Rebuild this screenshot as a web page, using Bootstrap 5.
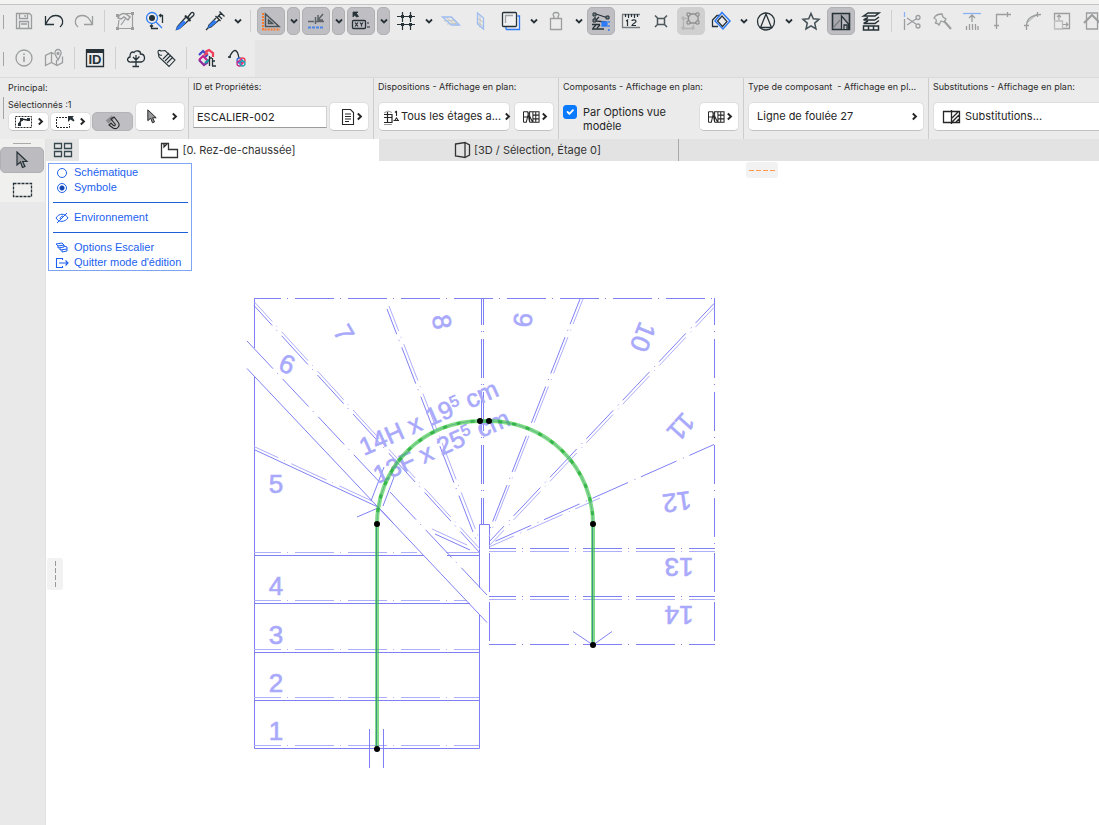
<!DOCTYPE html>
<html lang="fr">
<head>
<meta charset="utf-8">
<meta name="viewport" content="width=device-width, initial-scale=1">
<title>Escalier – mode d'édition</title>
<link href="https://cdn.jsdelivr.net/npm/bootstrap@5.3.0/dist/css/bootstrap.min.css" rel="stylesheet">
<style>
  :root { --ink:#263238; --dim:#9b9d9e; --blue:#2f7bf5; --bar:#ebebeb; --strong:#8080f5; --soft:#aeaefc; }
  body { font-family:Inter,"Liberation Sans",sans-serif; font-size:12px; color:#262626; background:#fff; overflow:hidden; }
  button { font:inherit; color:inherit; }
  svg { display:block; flex:none; fill:none; stroke:currentColor; stroke-width:1.3; }
  .titlestrip { height:5px; background:#f3f3f1; border-bottom:1px solid #c4c4c4; }
  .toolrow { background:var(--bar); color:var(--ink); padding:2px 0 5px 9px; overflow:hidden; }
  .toolrow.second { background:#e5e5e5; padding:0; }
  .second-inner { background:var(--bar); padding:4px 3px 5px 9px; }
  .grip { position:absolute; left:3px; width:1px; height:14px; background:#a5a5a5; }
  .tool { flex:none; width:30px; height:28px; padding:0; border:0; background:none; display:flex; align-items:center; justify-content:center; }
  .tool.on, .drop.on { background:#bfbec3; border:1px solid #b0afb4; border-radius:5px; }
  .tool.on { width:28px; margin:0 1px; }
  .tool.faded { background:#d0d0d0; border-radius:5px; width:28px; margin:0 1px; }
  .drop { flex:none; width:15px; height:28px; padding:0; border:0; background:none; display:flex; align-items:center; justify-content:center; }
  .drop.on { width:13px; margin:0 1px; }
  .split { flex:none; width:1px; height:22px; margin:3px 5px; background:#cfcfcf; }
  .dim { color:var(--dim); }
  .infobar { background:var(--bar); border-top:1px solid #dadada; overflow:hidden; }
  .panel { flex:none; width:185px; padding:2px 4px 8px 4px; border-left:1px solid #cdcdcd; }
  .panel.first { width:188px; border-left:0; padding-left:8px; padding-right:3px; }
  .panel.rest { flex:1 0 185px; padding-right:0; }
  .cap { font-size:9px; line-height:14px; white-space:pre; margin-bottom:8px; color:#2b2b2b; }
  .first .cap { margin-bottom:3px; }
  .box { height:29px; background:#fff; border:1px solid #dedede; border-bottom-color:#c2c2c2; border-radius:5px; padding:0 5px; display:flex; align-items:center; gap:4px; white-space:nowrap; }
  .box.sm { height:19px; width:41px; padding:0 3px; justify-content:space-between; gap:0; }
  .box.pair { width:40px; padding:0 4px 0 3px; gap:0; justify-content:space-between; }
  .smalls { gap:1px; }
  .box.pressed { background:#bfbec3; border-color:#b3b2b7; justify-content:center; }
  .idfield { width:134px; height:22px; border:1px solid #d0d0d0; border-bottom-color:#9c9c9c; padding:0 3px; font-size:11px; color:#222; background:#fff; border-radius:0; }
  .form-check-input.opt { width:14px; height:14px; border-radius:3px; margin:3px 0 0; flex:none; }
  .form-check-input.opt:checked { background-color:#0a7aff; border-color:#0a7aff; }
  .optrow { height:29px; }
  .optrow label { font-size:11px; line-height:14px; padding:3px 6px 0; }
  .toolbox { width:46px; background:#e9e9e9; border-right:1px solid #e2e2e2; }
  .toolbox-in { background:#f0f0ef; height:63px; }
  .toolbox .bar { width:18px; height:1px; background:#aaa; margin:4px auto 3px 13px; }
  .side { width:44px; height:26px; padding:0; border:0; background:none; display:flex; align-items:center; justify-content:center; color:var(--ink); }
  .side.on { background:#bcbbc0; border:1px solid #b0afb4; border-radius:5px; }
  .tabs { height:22px; background:#e3e3e3; }
  .grid-btn { width:33px; border:0; background:#e5e5e5; padding:0; display:flex; align-items:center; justify-content:center; color:#37474f; }
  .viewtab { width:300px; border:0; border-right:1px solid #a8a8a8; background:#e3e3e3; display:flex; align-items:center; justify-content:center; gap:3px; padding:0 2px 0 0; font-size:11px; color:#333; }
  .viewtab.current { background:#fff; border-right:0; }
  .drawing { min-width:0; overflow:hidden; }
  .drawing > svg { width:100%; height:100%; }
  .palette { position:absolute; left:2px; top:2px; width:144px; border:1px solid #7ea4f2; background:#fff; padding:1px 3px 0 4px; font-family:"Liberation Sans",sans-serif; font-size:11px; line-height:15px; }
  .palette a, .palette label { color:#1b5ff0; text-decoration:none; display:flex; align-items:center; gap:4px; height:15px; white-space:nowrap; padding-left:2px; }
  .palette label { padding-left:4px; gap:7px; }
  .palette a { gap:5px; }
  .palette hr { margin:7px 0; border:0; border-top:1px solid #1d5fd8; opacity:1; }
  .palette input { appearance:none; width:10px; height:10px; margin:0; border:1px solid #1f62e6; border-radius:50%; background:#fff; }
  .palette input:checked { background:radial-gradient(circle,#1546b5 0 2px,#fff 3px); }
  .handle { position:absolute; background:#f2f2f2; border-radius:3px; display:flex; align-items:center; justify-content:center; }
  .stairs { stroke-width:1; }
  .stairs .a { stroke:var(--strong); }
  .stairs .b { stroke:var(--soft); }
  .stairs .dd { stroke-dasharray:39 6 1 7; stroke-dashoffset:12; }
  .stairs text { font-family:"Liberation Sans",sans-serif; font-size:26px; fill:#a9a9fb; stroke:#a9a9fb; stroke-width:.6; }
  .stairs .dim-text { font-size:25px; }
</style>
</head>
<body class="vh-100 d-flex flex-column">
<svg width="0" height="0" class="position-absolute">
  <symbol id="dn" viewBox="0 0 8 8"><path d="M1 2.5 4 5.5 7 2.5" stroke-width="1.8"/></symbol>
  <symbol id="rt" viewBox="0 0 8 8"><path d="M2.5 1.3 5.3 4 2.5 6.7" stroke-width="1.7"/></symbol>
  <symbol id="bnv" viewBox="0 0 18 12"><path d="M.500 .500v11M.500 .500h4.500l2 11V.500h3.500v11h6.500v-11h-6.500M.500 11.500h3L6 1M.500 6h4.500M7 11.500h3M7 5l3 6M13.500 .500v11M11 4h6M11 8h6" stroke-width="1.100"/></symbol>
  <symbol id="cursor" viewBox="0 0 14 18"><path d="M2 1v13l3.500-3 2 5.500 2.500-1-2.300-5H12z" fill="#999b9e" stroke-width="1.200"/></symbol>
</svg>

<div class="titlestrip flex-shrink-0"></div>
<div class="toolrow d-flex flex-shrink-0 position-relative" role="toolbar" aria-label="Outils">
  <span class="grip" style="top:10px"></span>
  <button class="tool dim" aria-label="Enregistrer"><svg width="24" height="24"><path d="M4.500 4.500h13l2 2v13h-15zM7.500 4.500v5h8v-5M7.500 19.500v-7h9v7M9 15h6M13 6v2"/></svg></button>
  <button class="tool" aria-label="Annuler"><svg width="24" height="24"><path d="M3.500 7v8.500H12M3.500 15.500C7 9 9 6.500 13.500 6.500c7 0 9.500 7 4.500 11.500"/></svg></button>
  <button class="tool dim" aria-label="Rétablir"><svg width="24" height="24"><path d="M20.500 7v8.500H12M20.500 15.500C17 9 15 6.500 10.500 6.500c-7 0-9.500 7-4.500 11.500"/></svg></button>
  <span class="split"></span>
  <button class="tool dim" aria-label="Modifier"><svg width="24" height="24"><path d="M5 19.500h14M19.500 19V6M5 18 6 11M8 16l5-7M13 4.500h6" stroke-width="1.200"/><path d="M5 9c1-4 5-5 8-4l4 3-2 3-4-3-3 2z" stroke-width="1.500"/><path d="M3 18h3v3H3zM18 18h3v3h-3zM18 3h3v3h-3zM3 5h3v3H3z" fill="currentColor" stroke="none"/></svg></button>
  <button class="tool" aria-label="Rechercher"><svg width="24" height="24"><g stroke="#2f7bf5" stroke-width="1.300"><circle cx="9" cy="9" r="5.500"/><path d="m13 13 6 6"/></g><circle cx="9" cy="9" r="3" fill="#263238" stroke="none"/><path d="M19.500 14V6.500h-3m1.500-1.500L16.500 6.500l1.500 1.500M15 19.500H8.500V16m-1.500 1.500L8.500 16l1.500 1.500"/></svg></button>
  <button class="tool" aria-label="Pipette"><svg width="24" height="24"><path d="m13 8-8.500 9.500-1 3 3-1L16 11" /><path d="m10.500 12-6 6-1 2.500 3-1 6-6z" fill="#2f7bf5" stroke="#2f7bf5" stroke-width="1"/><path d="m12 6.500 5.500 5.500" stroke-width="2"/><path d="m15 8 3-4c2-1.500 4 .5 2.500 2.500l-4 3.500z"/></svg></button>
  <button class="tool" aria-label="Seringue"><svg width="24" height="24"><path d="m12.500 7 5 5M16 7l3 3M14 9l4-5M16.500 2.500l5 5M13 9l-7 7-1 3 3-1 8-7M6 18l-3 3"/><path d="m11 12-4 4-1 2 2-1 5-4z" fill="#2f7bf5" stroke="#2f7bf5"/></svg></button>
  <button class="drop" aria-label="Plus"><svg width="8" height="8"><use href="#dn"/></svg></button>
  <span class="split"></span>
  <button class="tool on" aria-label="Équerre"><svg width="24" height="24"><path d="M4 4v16.500H21" stroke="#ff7b2e" stroke-width="2" stroke-dasharray="2 1"/><path d="M6.500 5v12.500H20zM9.500 11v3.500h4z" stroke-width="1.500" stroke="#4a5358"/></svg></button>
  <button class="drop on" aria-label="Plus"><svg width="8" height="8"><use href="#dn"/></svg></button>
  <button class="tool on" aria-label="Accrochage"><svg width="24" height="24"><path d="M4 12.500h6M12 12.500h8M11.500 8v7M19 5l-5 6m0-5v5h5" stroke="#5c6468" stroke-width="1.500"/><path d="M4 18.500h16" stroke="#4c86e8" stroke-width="2" stroke-dasharray="3 1"/></svg></button>
  <button class="drop on" aria-label="Plus"><svg width="8" height="8"><use href="#dn"/></svg></button>
  <button class="tool on" aria-label="Coordonnées"><svg width="24" height="24"><path d="M4 3h5L7.500 4.500l2 3-2 .500-2-2L4 8z" fill="#263238" stroke-width=".8"/><rect x="3.500" y="11.500" width="13" height="8" rx="1"/><path d="m6 13.500 3 4m0-4-3 4M11 13.500l1.500 2 1.500-2m-1.500 2v2M18 14h2M18 18h3" stroke-width="1.200"/></svg></button>
  <button class="drop on" aria-label="Plus"><svg width="8" height="8"><use href="#dn"/></svg></button>
  <button class="tool" aria-label="Grille"><svg width="24" height="24"><path d="M3 7.500h5M10 7.500h5M17 7.500h4M3 15.500h5M10 15.500h5M17 15.500h4M8.500 3v3M8.500 9v4M8.500 17v4M16.500 3v3M16.500 9v4M16.500 17v4" stroke-width="1.200"/><path d="M7 6h3v3H7zM15 6h3v3h-3zM7 14h3v3H7zM15 14h3v3h-3z" fill="#263238" stroke="none"/></svg></button>
  <button class="drop" aria-label="Plus"><svg width="8" height="8"><use href="#dn"/></svg></button>
  <button class="tool" aria-label="Plan horizontal"><svg width="24" height="24"><path d="m5 12 10-.500M8 15l10-.500M7 8l9 8M12 8l6 8" stroke="#c6c6bf" stroke-width="1"/><path d="M3.500 8h9L20.500 16h-8z" stroke="#9dbdf2"/></svg></button>
  <button class="tool" aria-label="Plan vertical"><svg width="24" height="24"><path d="M8 9l6 4M8 13l6 4M11 6v13" stroke="#c6c6bf" stroke-width="1"/><path d="M8.500 4v11l6 5V9z" stroke="#9dbdf2"/></svg></button>
  <button class="tool" aria-label="Calques"><svg width="24" height="24"><path d="M7 20.500h13.500V7h-2M7 18v2.500" stroke="#2f7bf5" stroke-width="1.300"/><rect x="3.500" y="3.500" width="14" height="14" rx="1" fill="#f1f1f1"/><path d="M6.500 14V6.500H14" stroke="#a0a4a6"/></svg></button>
  <button class="drop" aria-label="Plus"><svg width="8" height="8"><use href="#dn"/></svg></button>
  <button class="tool dim" aria-label="Poids"><svg width="24" height="24"><path d="M6.500 9.500h11v11h-11zM9.500 9c0-1 1-1 .500-1.500C8 5 9.500 3.500 12 3.500s4 1.500 2 4c-.500.500.500.500.500 1.500"/></svg></button>
  <button class="drop" aria-label="Plus"><svg width="8" height="8"><use href="#dn"/></svg></button>
  <button class="tool on" aria-label="Trace"><svg width="24" height="24"><path d="m7 5 12 4M6 12l4-4M6 8v4l11 1" stroke-width="1.300"/><path d="M4 4h3v3H4zM17 7h3v3h-3zM4 10h3v3H4z" fill="#7b8489" stroke-width="1"/><path d="M3 15.500h8M3 20h12M4 19l3-3M8 19l3-3" stroke-width="1.300"/><path d="M13 13h5v4h-5z" fill="#2f7bf5" stroke="#2f7bf5"/><path d="M20 12v9h-3" stroke="#2f7bf5" stroke-dasharray="2 2"/></svg></button>
  <button class="tool" aria-label="Mesurer"><svg width="24" height="24"><path d="M21 5.500H3.500v13H21" stroke="#777d80"/><path d="M6.500 5v3M9.500 5v4M12.500 5v3M15.500 5v4M18.500 5v3M7 12l1.500-1v6M13 12c0-1.500 4-1.500 4 .5 0 1.500-4 2-4 4h4" stroke-width="1.200"/></svg></button>
  <button class="tool" aria-label="Ajuster"><svg width="24" height="24"><path d="M8.500 9.500h7v6h-7zM6 6.500l3 3M18 6.500l-3 3M6 18l3-3M18 18l-3-3" stroke="#4c565b" stroke-width="1.500"/></svg></button>
  <button class="tool faded dim" aria-label="Groupe"><svg width="24" height="24"><path d="M4.500 9v10.500h10v-4M5 9.500h4" stroke="#b4b4b4"/><path d="M9.500 14v-9H19v9z" stroke="#8d8d8d"/><path d="M8 4h3v3H8zM17 4h3v3h-3zM8 12h3v3H8zM17 12h3v3h-3z" fill="#d0d0d0" stroke="#858585" stroke-width="1"/><path d="M3 8h2v2H3zM3 18h2v2H3zM13 18h2v2h-2z" fill="#d0d0d0" stroke="#b0b0b0" stroke-width="1"/></svg></button>
  <button class="tool" aria-label="Rotation"><svg width="24" height="24"><path d="M9 17.500H3.500V11L8 6.500h3"/><path d="m13 3.500 8 8.500-7 8-8-8z" stroke="#2f7bf5" stroke-width="1.500"/><path d="m13 7 5 5.500-4.500 5-5-5.500z" stroke-width="1.200"/></svg></button>
  <button class="drop" aria-label="Plus"><svg width="8" height="8"><use href="#dn"/></svg></button>
  <button class="tool" aria-label="Nord"><svg width="24" height="24"><circle cx="12" cy="12.500" r="8.500"/><path d="M12 5 6.500 18.500h11z"/></svg></button>
  <button class="drop" aria-label="Plus"><svg width="8" height="8"><use href="#dn"/></svg></button>
  <button class="tool" aria-label="Favoris"><svg width="24" height="24"><path d="m12 4.500 2.300 5.300 5.700.500-4.300 3.800 1.300 5.900-5-3.100L7 20l1.300-5.900L4 10.300l5.700-.500z" stroke-width="1.500" stroke="#455057"/></svg></button>
  <button class="tool on" aria-label="Vue"><svg width="24" height="24"><path d="M3.500 4.500h17v16h-17z" fill="#a8a8ae" stroke-width="1.600"/><path d="m4 19 7-8" stroke="#7a7f83"/><path d="M12.500 20V7l7 8v5M15 20v-4h3v4" fill="#bfbec3"/></svg></button>
  <button class="tool" aria-label="Étages"><svg width="24" height="24"><path d="M4.500 7 9 4h11l-4 3zM4.500 11 9 8.500M16 11l4-3M4.500 11H16M4.500 14.500 9 12M4.500 14.500H16l4-3" stroke-width="1.500"/><path d="M4.500 17h15v4h-15zM9.500 17v4M14.500 17v4" stroke-width="1.500"/></svg></button>
  <span class="split"></span>
  <button class="tool dim" aria-label="Couper"><svg width="24" height="24"><path d="M4.500 3v5" stroke="#8ab1f0"/><path d="M4.500 10v11M7 9l9 6M7 16l9-6"/><circle cx="18" cy="8.500" r="2"/><circle cx="18" cy="17" r="2"/></svg></button>
  <button class="tool dim" aria-label="Hache"><svg width="24" height="24"><path d="M4 9c2-4 6-4 8-4l1 3 3 2-2 3-3-1-2 4c-1-2-2-2-4-2 2-1 2-4-1-5z"/><path d="m14 12 7 8" stroke-width="2"/></svg></button>
  <button class="tool dim" aria-label="Étirer"><svg width="24" height="24"><path d="M3 4.500h18" stroke="#8ab1f0"/><path d="M12 13V6M9 9l3-3 3 3M6.500 17v4M9.500 15v6M12.500 15v6M15.500 15v6M18 17v4"/></svg></button>
  <button class="tool dim" aria-label="Angle"><svg width="24" height="24"><path d="M6.500 20V5.500H21M17.500 3v5M4 16.500h5"/></svg></button>
  <button class="tool dim" aria-label="Arrondi"><svg width="24" height="24"><path d="M6.500 21v-5C7 10 12 6 21 5.500M17.500 3v5M4 16.500h5"/><path d="m7 14 10-9" stroke-width=".8"/></svg></button>
  <button class="tool dim" aria-label="Redimensionner"><svg width="24" height="24"><path d="M12 19.500h7.500v-15h-15V11"/><path d="M4.500 12v8h8v-8z" stroke="#bbb"/><path d="M9 11V6M7 8l2-2 2 2M13 15.500h5M16 13.500l2 2-2 2" stroke-width="1.100"/></svg></button>
  <button class="tool dim" aria-label="Toit"><svg width="24" height="24"><path d="m4 14 8-8 8 8" stroke-width="2"/><path d="M6.500 12v8h11v-8M6.500 11V4h11v7" /></svg></button>
</div>
<div class="toolrow second d-flex flex-shrink-0" role="toolbar" aria-label="Outils complémentaires">
  <div class="second-inner d-flex position-relative">
    <span class="grip" style="top:12px"></span>
    <button class="tool dim" aria-label="Infos"><svg width="24" height="24"><circle cx="12" cy="12" r="8"/><path d="M12 10.500V16M12 7.500V9" stroke-width="1.600"/></svg></button>
    <button class="tool dim" aria-label="Carte"><svg width="24" height="24"><path d="M12 8 9.500 6.500l-6 3v10l6-3 5.500 3 5.500-3v-6M9.500 7v9M14.500 14v5"/><path d="m16 14-3-6c-1-6 7-6 6 0z"/><circle cx="16" cy="7.500" r="1"/></svg></button>
    <span class="split"></span>
    <button class="tool" aria-label="ID"><svg width="24" height="24"><path d="M3.500 4v16.500h17V4z" stroke-width="1.300"/><path d="M3 3h18v4H3z" fill="#263238" stroke="none"/><text x="12" y="18" text-anchor="middle" font-family="Liberation Sans" font-size="13" font-weight="bold" fill="#263238" stroke="none">ID</text></svg></button>
    <span class="split"></span>
    <button class="tool" aria-label="Arbre"><svg width="24" height="24"><path d="M8 16c-5 1-6-4-2-5-.500-4 2-6 4-4.500 2-3 7-1.500 6.500 1.500 5 0 5.500 7 .5 8H8zM12 9v11.500M9 11l3 3 3.500-3.500M8.500 20.500H15"/></svg></button>
    <button class="tool" aria-label="Étiquette"><svg width="24" height="24"><path d="M4 6c0-2 2-2 3-1l4-.500L21 14l-6 6.500L5 11zM4 6c0 2 2 4 4 3M9 13l6-6M11 15l6-6M13 17l6-6" stroke-width="1.100"/></svg></button>
    <span class="split"></span>
    <button class="tool" aria-label="Couleurs"><svg width="24" height="24"><g stroke-width="2.200"><path d="m4 9 4-4 4 4-2 2" stroke="#3b49c5"/><path d="m10 6 4-2 4 3v4" stroke="#ef3e5c"/><path d="m4 14 4-4 5 5" stroke="#c1278d"/><path d="m4 14 5 5 4-3" stroke="#8a2d9c"/><path d="m9 9 4-2" stroke="#ef3e5c"/><path d="m10 17 4-3" stroke="#179aa5"/></g><path d="M14.500 10v10M17.500 12v8M14 12h3M17 15h3M17 20h4" stroke-width="1.300"/></svg></button>
    <button class="tool" aria-label="Courbe"><svg width="24" height="24"><path d="M4 12c4-9 8-11 10 0M3 11h3"/><g stroke-width="1.300"><circle cx="14.500" cy="14.500" r="2.500" stroke="#3566d8"/><circle cx="17.500" cy="14.500" r="2.500" stroke="#ef3e5c"/><circle cx="14.500" cy="17.500" r="2.500" stroke="#c1278d"/><circle cx="17.500" cy="17.500" r="2.500" stroke="#20a0b0"/></g></svg></button>
  </div>
</div>

<div class="infobar d-flex flex-shrink-0 position-relative">
  <span class="grip" style="top:19px;height:22px"></span>
  <section class="panel first d-flex align-items-end">
    <div>
      <div class="cap">Principal:</div>
      <div class="cap mb-0">Sélectionnés :1</div>
      <div class="d-flex smalls">
        <button class="box sm" aria-label="Sélection"><svg width="22" height="14"><path d="M3.500 1.500h16v11h-16z" stroke-dasharray="2 1" stroke-width="1"/><path d="m7 9 3-5 5 1" stroke-width="1.500"/><path d="M6 8h3v3H6zM8 3h3v3H8zM15 3h3v3h-3z" fill="#263238" stroke="none"/></svg><svg width="9" height="9"><use href="#rt"/></svg></button>
        <button class="box sm" aria-label="Zone"><svg width="22" height="14"><path d="M13 2.500H2.500v10h13V9" stroke-dasharray="2 1" stroke-width="1"/><path d="M14 1h6l-1.500 1.500 2 3-1 1-3-2L14 7z" fill="#263238" stroke="none"/></svg><svg width="9" height="9"><use href="#rt"/></svg></button>
        <button class="box sm pressed" aria-label="Aimant"><svg width="18" height="16"><path d="m3 8 6-5" stroke="#8c8c90" stroke-width="4"/><path d="m5 11 4 3c4 2 8-2 5-6l-4-5-3 2 4 5c1 1-1 3-2 1L7 9z" stroke-width="1.100"/></svg></button>
      </div>
    </div>
    <button class="box ms-auto justify-content-end" style="width:50px" aria-label="Flèche"><svg width="12" height="15"><use href="#cursor"/></svg><svg class="ms-2" width="9" height="9"><use href="#rt"/></svg></button>
  </section>
  <section class="panel">
    <label class="cap d-block" for="eid">ID et Propriétés:</label>
    <div class="d-flex align-items-center justify-content-between">
      <input id="eid" class="idfield" type="text" value="ESCALIER-002">
      <button class="box pair" aria-label="Propriétés"><svg width="22" height="18"><path d="M9.500 1.500h8l3 3v12h-11zM12 6h6M12 8.500h6M12 11h6M12 13.500h4" stroke-width="1.100"/></svg><svg width="9" height="9"><use href="#rt"/></svg></button>
    </div>
  </section>
  <section class="panel">
    <div class="cap">Dispositions - Affichage en plan:</div>
    <div class="d-flex gap-1">
      <button class="box px-1" style="width:132px;font-size:11px;gap:2px"><svg width="16" height="16"><path d="M1 5.500h8v8H1M4.500 3v11M1 8.500h8" stroke-width="1.200"/><path d="m1 4 4-2 4 1.500M1 15.500h8" stroke="#999" stroke-width="1"/><path d="M13.500 2v5M12 3.500 13.500 2M10.500 11.500H16M12 11l1.500-2L15 11" stroke-width="1.100"/></svg><span class="flex-grow-1 text-start">Tous les étages a...</span><svg width="9" height="9"><use href="#rt"/></svg></button>
      <button class="box pair ps-2" aria-label="Représentation"><svg width="17" height="12"><use href="#bnv"/></svg><svg width="9" height="9"><use href="#rt"/></svg></button>
    </div>
  </section>
  <section class="panel">
    <div class="cap">Composants - Affichage en plan:</div>
    <div class="d-flex optrow">
      <input class="form-check-input opt" type="checkbox" id="byopt" checked>
      <label for="byopt" class="flex-grow-1">Par Options vue<br>modèle</label>
      <button class="box pair ps-2" aria-label="Représentation"><svg width="17" height="12"><use href="#bnv"/></svg><svg width="9" height="9"><use href="#rt"/></svg></button>
    </div>
  </section>
  <section class="panel">
    <div class="cap">Type de composant  - Affichage en pl...</div>
    <button class="box w-100 justify-content-between ps-2 pe-1" style="font-size:11px"><span>Ligne de foulée 27</span><svg width="9" height="9"><use href="#rt"/></svg></button>
  </section>
  <section class="panel rest">
    <div class="cap">Substitutions - Affichage en plan:</div>
    <button class="box w-100 rounded-end-0 border-end-0 ps-2" style="font-size:11px"><svg width="19" height="16"><path d="M9 2.500H1.500v11H9M9.500 1v14M9 2.500h8.500v11H9M10 9l6-6M10 13l7-7M14 13l3-3"/></svg>Substitutions...</button>
  </section>
</div>

<div class="d-flex flex-grow-1" style="min-height:0">
  <aside class="toolbox flex-shrink-0">
    <div class="toolbox-in overflow-hidden">
      <div class="bar"></div>
      <button class="side on" aria-label="Flèche"><svg width="14" height="18"><use href="#cursor"/></svg></button>
      <button class="side mt-1" aria-label="Zone de sélection"><svg width="22" height="18"><path d="M2.500 2.500h18v13h-18z" stroke-dasharray="3 1"/></svg></button>
    </div>
  </aside>
  <main class="d-flex flex-column flex-grow-1" style="min-width:0">
    <div class="tabs d-flex flex-shrink-0">
      <button class="grid-btn" aria-label="Aperçu des onglets"><svg width="20" height="16"><path d="M1.500 1.500h7v5h-7zM11.500 1.500h7v5h-7zM1.500 9.500h7v5h-7zM11.500 9.500h7v5h-7z"/></svg></button>
      <button class="viewtab current"><svg width="19" height="17"><path d="M1.500 1.500h7v6h9v8h-16zM4 2v3l3-3" /></svg>[0. Rez-de-chaussée]</button>
      <button class="viewtab"><svg width="17" height="18"><path d="M1.500 3 11 1.500v15L1.500 15zM11 1.500l4.500 2.500v10L11 16.500"/></svg>[3D / Sélection, Étage 0]</button>
    </div>
    <div class="drawing flex-grow-1 position-relative">
      <svg class="stairs" role="img" aria-label="Plan de l'escalier">
        <g transform="translate(-46 -161)">
          <!-- outline -->
          <path class="a dd" d="M254 298.500H715M714.500 298V548"/>
          <path class="a" d="M254.500 298V348M254.500 376V748.500H479.500V615M479.500 588V524.500H489.500V548"/>
          <path class="a" stroke-dasharray="39 10" d="M489.500 553V644M714.500 553V644"/>
          <path class="a dd" d="M489 548.500H715M489 596.500H715M489 644.500H715"/>
          <path class="b dd" d="M489 551.500H715M489 599.500H715"/>
          <!-- lower flight -->
          <path class="a" d="M254 555.500H424M447 555.500H479M254 603.500H470M254 652.500H479M254 700.500H479"/>
          <path class="b dd" d="M254 552.500H417M254 600.500H467M254 649.500H479M254 697.500H479M254 745.500H479"/>
          <path class="b" d="M446 552.500H479"/>
          <!-- winders, left -->
          <g class="a">
            <path class="dd" d="M254 305.500 480 553M387 309 478 545M481.500 298V524M483.500 298V524"/>
            <path d="M254 449.500 378 507M435 534 470 550"/>
          </g>
          <g class="b">
            <path class="dd" d="M254 301.500 480 549M389 306 480 541M254 446.500 372 501"/>
            <path d="M432 529 467 545"/>
          </g>
          <!-- winders, right -->
          <path class="a dd" d="M580 299 489 531M714 303.500 489 542M714 444.500 489 544"/>
          <path class="b dd" d="M583 299 489 537M714 307.500 489 546"/>
          <path class="b dd" d="M600 498 489 547"/>
          <!-- cut lines -->
          <path class="a" d="M247 368.500 487 622.500M378 507 394 524"/>
          <path class="a" stroke-dasharray="38 6 1 7" d="M247 341 379 481.500M390 492 487 595"/>
          <path class="a" d="M384 467 371 501M394 477 383 506M357 517 378 508"/>
          <path class="a" d="M369.500 729V768M383.500 729V768M573 631.500 593 645 612 631.500"/>
          <!-- tread numbers -->
          <g text-anchor="middle">
            <text x="276" y="740">1</text><text x="276" y="692">2</text><text x="276" y="644">3</text><text x="276" y="595">4</text><text x="276" y="493">5</text>
            <text transform="translate(287 364) rotate(22)" y="9">6</text>
            <text transform="translate(344 333) rotate(60)" y="9">7</text>
            <text transform="translate(442 322) rotate(82)" y="9">8</text>
            <text transform="translate(523 320) rotate(96)" y="9">9</text>
            <text transform="translate(643 337) rotate(112)" y="9">10</text>
            <text transform="translate(681 427) rotate(132)" y="9">11</text>
            <text transform="translate(677 502) rotate(172)" y="9">12</text>
            <text transform="translate(679 567) rotate(180)" y="9">13</text>
            <text transform="translate(679 615) rotate(180)" y="9">14</text>
          </g>
          <text class="dim-text" transform="translate(364 456) rotate(-24)">14H x 19<tspan dy="-8" style="font-size:16px">5</tspan><tspan dy="8"> cm</tspan></text>
          <text class="dim-text" transform="translate(378 484) rotate(-24)">13F x 25<tspan dy="-8" style="font-size:16px">5</tspan><tspan dy="8"> cm</tspan></text>
          <!-- walking line -->
          <path d="M377 748V524A103 103 0 0 1 480 421H489A104 103 0 0 1 593 524V644" stroke="#2fc435" stroke-opacity=".6" stroke-width="4"/>
          <path d="M377 524A103 103 0 0 1 480 421H489A104 103 0 0 1 593 524" stroke="#22b52c" stroke-width="3" stroke-opacity=".8" stroke-dasharray="4 10" stroke-dashoffset="-12"/>
          <path d="M376.500 748V524M592.500 524V644" stroke="#3f9686"/>
          <path d="M377 524A103 103 0 0 1 480 421H489A104 103 0 0 1 593 524" stroke="#3f9686" stroke-opacity=".5"/>
          <g fill="#000" stroke="none"><circle cx="377" cy="524" r="3"/><circle cx="480" cy="421" r="3"/><circle cx="489" cy="421" r="3"/><circle cx="593" cy="524" r="3"/><circle cx="593" cy="645" r="3"/><circle cx="377" cy="749" r="3"/></g>
        </g>
      </svg>
      <div class="palette">
        <label><input type="radio" name="rep">Schématique</label>
        <label><input type="radio" name="rep" checked>Symbole</label>
        <hr>
        <a href="#"><svg width="14" height="12"><path d="M1 6c3-5 9-5 12 0-3 4-9 5-12 0zM2 11 12 1M5 7c0-2 2-3 3-3" stroke-width="1"/></svg>Environnement</a>
        <hr>
        <a href="#"><svg width="14" height="12"><path d="m1 2 6-1 2 2-6 1zM3 4v2l6-1V3M5 6v2l7-1V5L9 4M7 8v2l5-1V7" stroke-width="1"/></svg>Options Escalier</a>
        <a href="#"><svg width="14" height="12"><path d="M7.500 3V1.500h-6v9h6V9M4 6h9M10.500 3.500 13 6l-2.500 2.500" stroke-width="1.100"/></svg>Quitter mode d'édition</a>
      </div>
      <span class="handle" style="left:700px;top:1px;width:32px;height:16px"><svg width="26" height="1"><path d="M0 .5h26" stroke="#ff9a4d" stroke-width="1" stroke-dasharray="5 2"/></svg></span>
      <span class="handle" style="left:1px;top:397px;width:16px;height:32px"><svg width="1" height="26"><path d="M.5 0v26" stroke="#999" stroke-width="1" stroke-dasharray="5 2"/></svg></span>
    </div>
  </main>
</div>
<script src="https://cdn.jsdelivr.net/npm/bootstrap@5.3.0/dist/js/bootstrap.bundle.min.js"></script>
</body>
</html>
